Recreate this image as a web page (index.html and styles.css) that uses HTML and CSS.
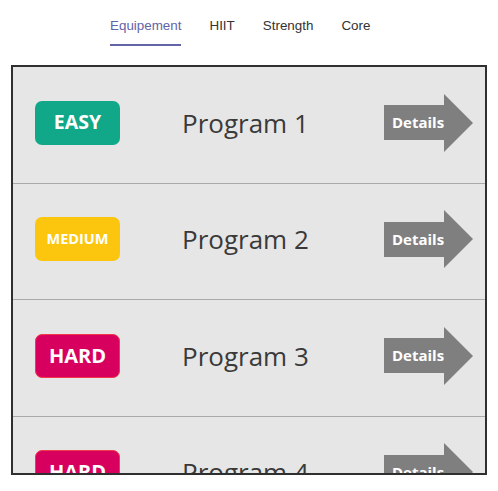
FILE: index.html
```html
<!DOCTYPE html>
<html>
<head>
<meta charset="utf-8">
<link rel="stylesheet" href="styles.css">
</head>
<body>
<nav class="tabs">
  <span class="tab active">Equipement</span>
  <span class="tab">HIIT</span>
  <span class="tab">Strength</span>
  <span class="tab">Core</span>
</nav>
<div class="list">
  <div class="row">
    <div class="badge easy">EASY</div>
    <div class="name">Program 1</div>
    <div class="arrow"><span class="arrow-body">Details</span><span class="arrow-head"></span></div>
  </div>
  <div class="row">
    <div class="badge medium">MEDIUM</div>
    <div class="name">Program 2</div>
    <div class="arrow"><span class="arrow-body">Details</span><span class="arrow-head"></span></div>
  </div>
  <div class="row">
    <div class="badge hard">HARD</div>
    <div class="name">Program 3</div>
    <div class="arrow"><span class="arrow-body">Details</span><span class="arrow-head"></span></div>
  </div>
  <div class="row">
    <div class="badge hard">HARD</div>
    <div class="name">Program 4</div>
    <div class="arrow"><span class="arrow-body">Details</span><span class="arrow-head"></span></div>
  </div>
</div>
</body>
</html>
```
FILE: styles.css
```css
html, body {
  margin: 0;
  padding: 0;
  background: #ffffff;
}
body {
  font-family: "Open Sans", "Liberation Sans", sans-serif;
}
.tabs {
  display: flex;
  gap: 28px;
  padding-left: 110px;
  font-family: "Liberation Sans", Arial, sans-serif;
  font-size: 13.4px;
}
.tab {
  line-height: 16px;
  padding-top: 18px;
  padding-bottom: 10px;
  border-bottom: 2px solid transparent;
  color: #333333;
}
.tab.active {
  color: #6264a7;
  border-bottom-color: #6264a7;
}
.list {
  margin-top: 19px;
  margin-left: 11px;
  width: 476px;
  height: 410px;
  box-sizing: border-box;
  border: 2px solid #2f2f2f;
  background: #e6e6e6;
  overflow: hidden;
}
.row {
  display: flex;
  align-items: center;
  height: 116.5px;
  box-sizing: border-box;
  border-bottom: 1px solid #a9a9a9;
  padding-left: 22px;
  padding-right: 12px;
  padding-bottom: 4px;
}
.badge {
  width: 85px;
  height: 44px;
  box-sizing: border-box;
  border-radius: 7px;
  display: flex;
  align-items: center;
  justify-content: center;
  padding-bottom: 3px;
  color: #ffffff;
  font-weight: 700;
  font-size: 19.5px;
}
.badge.easy {
  background: #10a888;
}
.badge.medium {
  background: #fcc60f;
  font-size: 14.5px;
  padding-bottom: 1px;
}
.badge.hard {
  background: #d8005f;
  border: 1px solid #f03a4c;
  font-size: 20px;
  padding-bottom: 1px;
}
.name {
  margin-left: 62px;
  font-size: 26px;
  color: #3a3a3a;
  font-weight: 400;
}
.arrow {
  margin-left: auto;
  display: flex;
  align-items: center;
}
.arrow-body {
  width: 60px;
  height: 35px;
  box-sizing: border-box;
  padding-left: 8px;
  background: #7f7f7f;
  color: #ffffff;
  font-weight: 700;
  font-size: 15px;
  line-height: 35px;
  white-space: nowrap;
}
.arrow-head {
  width: 0;
  height: 0;
  border-left: 29px solid #7f7f7f;
  border-top: 29px solid transparent;
  border-bottom: 29px solid transparent;
}
```
